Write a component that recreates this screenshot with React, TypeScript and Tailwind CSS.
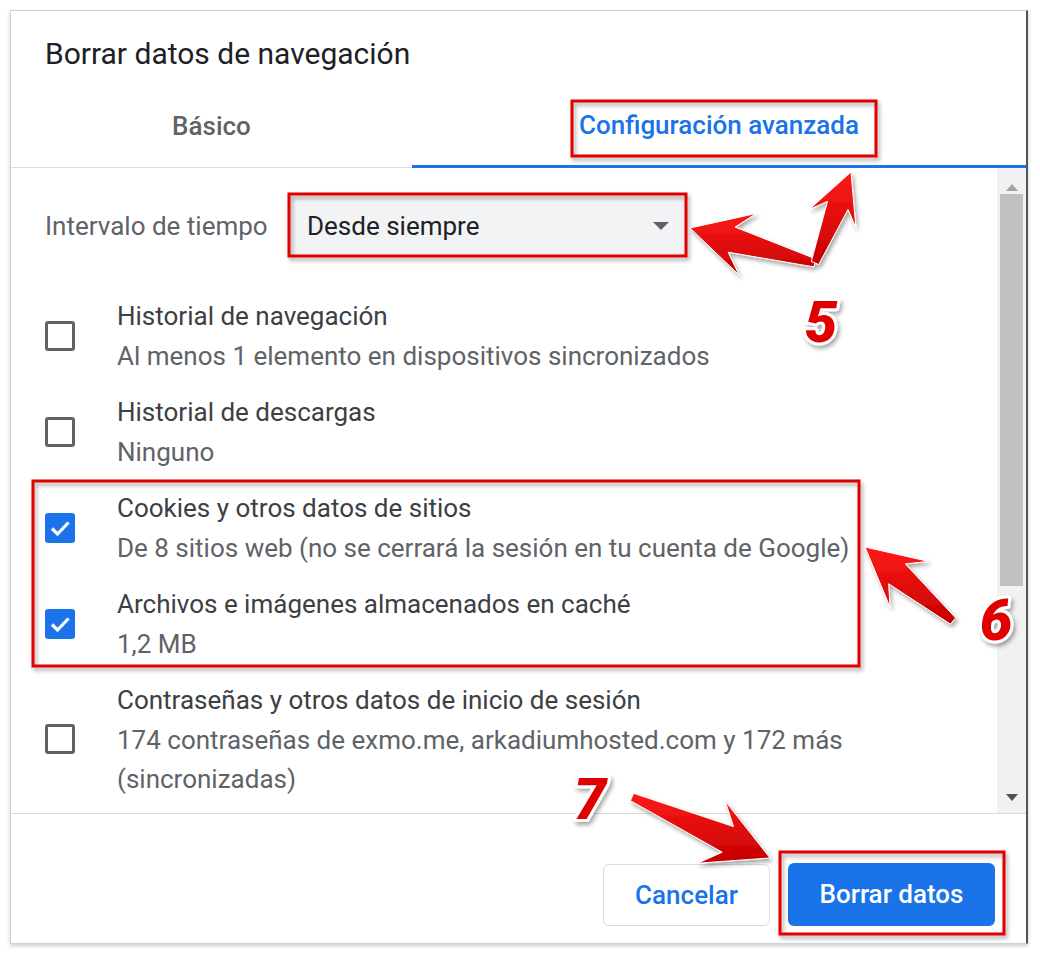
import React from 'react';

type Pt = [number, number];

// fat arrow polygon from tail to tip
const arrowPoints = (tail: Pt, tip: Pt, headLen: number, headW: number, neckW: number, tailW: number) => {
  const [tx, ty] = tail;
  const [px, py] = tip;
  const len = Math.hypot(px - tx, py - ty);
  const dx = (px - tx) / len;
  const dy = (py - ty) / len;
  const nx = -dy;
  const ny = dx;
  const bx = px - dx * headLen;
  const by = py - dy * headLen;
  const kx = px - dx * headLen * 0.72;
  const ky = py - dy * headLen * 0.72;
  const pts: Pt[] = [
    [tx + (nx * tailW) / 2, ty + (ny * tailW) / 2],
    [kx + (nx * neckW) / 2, ky + (ny * neckW) / 2],
    [bx + (nx * headW) / 2, by + (ny * headW) / 2],
    [px, py],
    [bx - (nx * headW) / 2, by - (ny * headW) / 2],
    [kx - (nx * neckW) / 2, ky - (ny * neckW) / 2],
    [tx - (nx * tailW) / 2, ty - (ny * tailW) / 2],
  ];
  return pts.map((p) => `${p[0].toFixed(1)},${p[1].toFixed(1)}`).join(' ');
};

const Checkbox = ({ checked }: { checked?: boolean }) =>
  checked ? (
    <div className="w-[30px] h-[30px] rounded-[3px] bg-[#1a73e8] flex items-center justify-center shrink-0">
      <svg width="30" height="30" viewBox="0 0 30 30">
        <path d="M7 15.5l5.5 5.5L23.5 9.5" fill="none" stroke="#fff" strokeWidth="3.2" />
      </svg>
    </div>
  ) : (
    <div className="w-[30px] h-[30px] rounded-[3px] border-[3px] border-[#5f6368] shrink-0" />
  );

const rows = [
  { title: 'Historial de navegación', sub: ['Al menos 1 elemento en dispositivos sincronizados'] },
  { title: 'Historial de descargas', sub: ['Ninguno'] },
  { title: 'Cookies y otros datos de sitios', sub: ['De 8 sitios web (no se cerrará la sesión en tu cuenta de Google)'], checked: true },
  { title: 'Archivos e imágenes almacenados en caché', sub: ['1,2 MB'], checked: true },
  { title: 'Contraseñas y otros datos de inicio de sesión', sub: ['174 contraseñas de exmo.me, arkadiumhosted.com y 172 más', '(sincronizadas)'] },
];

const Annotations = () => (
  <svg className="absolute inset-0 pointer-events-none" width="1040" height="956" viewBox="0 0 1040 956">
    <defs>
      <filter id="sh" x="-20%" y="-20%" width="140%" height="140%">
        <feDropShadow dx="2" dy="3" stdDeviation="2" floodColor="#000" floodOpacity="0.35" />
      </filter>
      <linearGradient id="rg" x1="0" y1="0" x2="0" y2="1">
        <stop offset="0" stopColor="#ff1a1a" />
        <stop offset="1" stopColor="#c40000" />
      </linearGradient>
    </defs>
    <g fill="none" stroke="#e00000" strokeWidth="3" filter="url(#sh)">
      <rect x="572" y="101" width="304" height="55" />
      <rect x="289" y="194" width="397" height="62" />
      <rect x="33" y="481" width="826" height="185" />
      <rect x="780" y="852" width="224" height="82" />
    </g>
    <g fill="url(#rg)" stroke="#fff" strokeWidth="1" filter="url(#sh)">
      <polygon points={arrowPoints([815, 263], [690, 228], 60, 64, 26, 8)} />
      <polygon points={arrowPoints([815, 263], [851, 172], 50, 50, 22, 8)} />
      <polygon points={arrowPoints([953, 621], [865, 547], 58, 60, 26, 8)} />
      <polygon points={arrowPoints([632, 797], [770, 858], 64, 68, 28, 8)} />
    </g>
    <g
      fontFamily="Roboto, 'Liberation Sans', sans-serif"
      fontWeight="900"
      fontStyle="italic"
      fontSize="58"
      fill="#e00000"
      stroke="#fff"
      strokeWidth="6"
      strokeLinejoin="round"
      textAnchor="middle"
      filter="url(#sh)"
      style={{ paintOrder: 'stroke' }}
    >
      <text x="821" y="342">5</text>
      <text x="996" y="640">6</text>
      <text x="590" y="819">7</text>
    </g>
  </svg>
);

export default function App() {
  return (
    <div className="relative w-[1040px] h-[956px] bg-white font-['Roboto','Liberation_Sans',sans-serif] overflow-hidden">
      <div className="pt-[10px] pl-[10px]">
        <div className="w-[1018px] h-[934px] flex flex-col border-l border-t border-b border-[#d0d0d0] border-r-2 border-r-[#555] shadow-[0_2px_4px_rgba(0,0,0,0.2)] bg-white">
          <div className="h-[75px] pl-[34px] pt-[24px] text-[30px] leading-[38px] text-[#202124]">
            Borrar datos de navegación
          </div>
          <div className="h-[82px] flex text-[26px] font-medium">
            <div className="w-[401px] flex items-center justify-center border-b border-[#dadce0] text-[#5f6368]">
              Básico
            </div>
            <div className="flex-1 flex items-center justify-center border-b-[3px] border-[#1a73e8] text-[#1a73e8]">
              Configuración avanzada
            </div>
          </div>
          <div className="h-[645px] flex">
            <div className="flex-1 pl-[34px]">
              <div className="mt-[28px] h-[60px] flex items-center">
                <div className="w-[246px] text-[26px] text-[#5f6368]">Intervalo de tiempo</div>
                <div className="w-[393px] h-[60px] bg-[#f1f3f4] flex items-center justify-between pl-[16px] pr-[15px] text-[26px] text-[#202124]">
                  <span>Desde siempre</span>
                  <svg width="16" height="8" viewBox="0 0 16 8">
                    <path d="M0 0h16L8 8z" fill="#5f6368" />
                  </svg>
                </div>
              </div>
              <div className="mt-[40px] flex flex-col gap-[16px]">
                {rows.map((r) => (
                  <div key={r.title} className="flex items-center">
                    <Checkbox checked={r.checked} />
                    <div className="ml-[42px] text-[26px] leading-[40px] whitespace-nowrap">
                      <div className="text-[#3c4043]">{r.title}</div>
                      {r.sub.map((s, i) => (
                        <div key={s} className={`text-[#5f6368] ${i > 0 ? 'leading-[38px]' : ''}`}>
                          {s}
                        </div>
                      ))}
                    </div>
                  </div>
                ))}
              </div>
            </div>
            <div className="w-[29px] bg-[#f1f1f1] flex flex-col items-center">
              <div className="h-[26px] flex items-center justify-center pt-[12px]">
                <svg width="12" height="7" viewBox="0 0 12 7">
                  <path d="M0 7h12L6 0z" fill="#a3a3a3" />
                </svg>
              </div>
              <div className="w-[23px] h-[392px] bg-[#c1c1c1]" />
              <div className="flex-1" />
              <div className="h-[38px] flex items-start justify-center pt-[19px]">
                <svg width="12" height="7" viewBox="0 0 12 7">
                  <path d="M0 0h12L6 7z" fill="#505050" />
                </svg>
              </div>
            </div>
          </div>
          <div className="flex-1 border-t border-[#dadce0] flex justify-end items-start pt-[50px] pr-[31px] gap-[18px] text-[26px] font-medium">
            <button className="w-[167px] h-[62px] rounded-[6px] border border-[#dadce0] text-[#1a73e8] bg-white">
              Cancelar
            </button>
            <button className="w-[207px] h-[63px] -mt-px rounded-[6px] bg-[#1a73e8] text-white">
              Borrar datos
            </button>
          </div>
        </div>
      </div>
      <Annotations />
    </div>
  );
}
